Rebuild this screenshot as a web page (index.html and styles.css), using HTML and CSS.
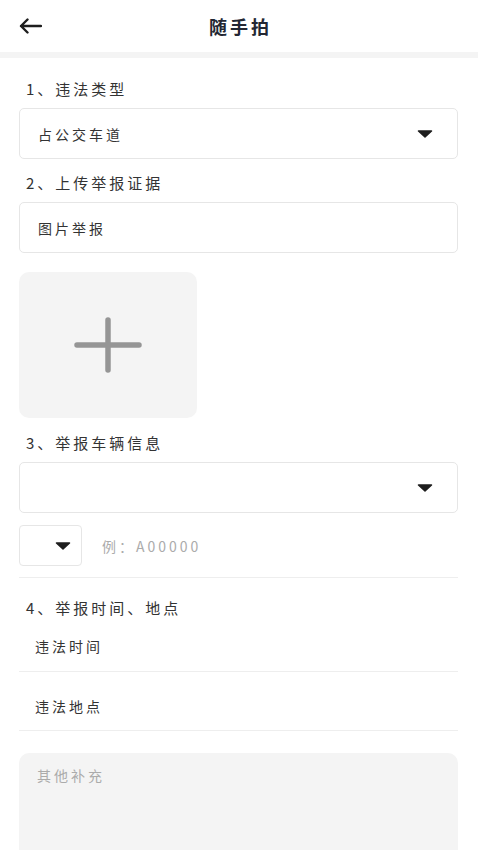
FILE: index.html
```html
<!DOCTYPE html>
<html lang="zh-CN">
<head>
<meta charset="utf-8">
<title>随手拍</title>
<link rel="stylesheet" href="styles.css">
</head>
<body>
<header class="topbar">
  <div class="back">
    <svg width="24" height="16" viewBox="0 0 24 16"><path d="M23 8H3M9.5 1.5L3 8l6.5 6.5" fill="none" stroke="#1e1e1e" stroke-width="2.4" stroke-linecap="round" stroke-linejoin="round"/></svg>
  </div>
  <h1 class="title">随手拍</h1>
  <div class="spacer"></div>
</header>
<div class="band"></div>
<main class="form">
  <div class="label first">1、违法类型</div>
  <div class="box select">
    <span class="val">占公交车道</span>
    <svg class="caret" width="16" height="8" viewBox="0 0 16 8"><path d="M1.5 1H14.5L8 7Z" fill="#1e1e1e" stroke="#1e1e1e" stroke-width="1.5" stroke-linejoin="round"/></svg>
  </div>

  <div class="label">2、上传举报证据</div>
  <div class="box"><span class="val">图片举报</span></div>

  <div class="upload">
    <svg width="68" height="56" viewBox="0 0 68 56"><path d="M3 28H65M34 3V53" stroke="#959595" stroke-width="5.5" stroke-linecap="round"/></svg>
  </div>

  <div class="label third">3、举报车辆信息</div>
  <div class="box select">
    <span class="val"></span>
    <svg class="caret" width="16" height="8" viewBox="0 0 16 8"><path d="M1.5 1H14.5L8 7Z" fill="#1e1e1e" stroke="#1e1e1e" stroke-width="1.5" stroke-linejoin="round"/></svg>
  </div>
  <div class="plate">
    <div class="prov">
      <svg class="caret" width="16" height="8" viewBox="0 0 16 8"><path d="M1.5 1H14.5L8 7Z" fill="#1e1e1e" stroke="#1e1e1e" stroke-width="1.5" stroke-linejoin="round"/></svg>
    </div>
    <span class="ph">例：A00000</span>
  </div>

  <div class="label fourth">4、举报时间、地点</div>
  <div class="row r1">违法时间</div>
  <div class="row r2">违法地点</div>

  <div class="note"><span class="ph">其他补充</span></div>
</main>
</body>
</html>
```
FILE: styles.css
```css
* { box-sizing: border-box; margin: 0; padding: 0; }
html, body { background: #ffffff; }
body {
  font-family: "Noto Sans CJK SC", "Noto Sans", sans-serif;
  color: #333333;
  font-size: 14px;
  letter-spacing: 3px;
}
.topbar {
  height: 52px;
  display: grid;
  grid-template-columns: 1fr auto 1fr;
  align-items: center;
}
.back { padding-left: 18px; display: flex; align-items: center; }
.title {
  font-size: 18px;
  font-weight: 700;
  color: #232733;
  letter-spacing: 3px;
  padding-left: 3px;
  line-height: 24px;
}
.band { height: 6px; background: #f4f4f4; }
.form { padding: 7px 20px 0 19px; }
.label {
  font-size: 15px;
  line-height: 24px;
  padding-left: 7px;
  margin: 12px 0 7px;
  color: #333;
}
.label.third { margin-top: 13px; }
.label.fourth { margin-top: 18px; margin-bottom: 0; }
.box {
  height: 51px;
  border: 1px solid #e6e6e6;
  border-radius: 5px;
  display: flex;
  align-items: center;
  padding: 0 24px 0 18px;
}
.select { justify-content: space-between; }
.val { line-height: 20px; color: #333; }
.caret { display: block; flex: none; }
.upload {
  margin-top: 19px;
  width: 178px;
  height: 146px;
  background: #f4f4f4;
  border-radius: 10px;
  display: flex;
  align-items: center;
  justify-content: center;
}
.plate {
  margin-top: 12px;
  padding-bottom: 11px;
  border-bottom: 1px solid #eeeeee;
  display: flex;
  align-items: center;
  gap: 20px;
}
.prov {
  width: 63px;
  height: 41px;
  border: 1px solid #e6e6e6;
  border-radius: 4px;
  display: flex;
  align-items: center;
  justify-content: flex-end;
  padding-right: 10px;
}
.ph { color: #ababab; line-height: 20px; }
.row {
  line-height: 20px;
  padding-left: 16px;
  border-bottom: 1px solid #eeeeee;
  color: #333;
}
.r1 { padding-top: 16px; padding-bottom: 15px; }
.r2 { padding-top: 24px; padding-bottom: 14px; }
.note {
  margin-top: 22px;
  height: 130px;
  background: #f4f4f4;
  border-radius: 10px;
  padding: 12px 18px;
}
```
